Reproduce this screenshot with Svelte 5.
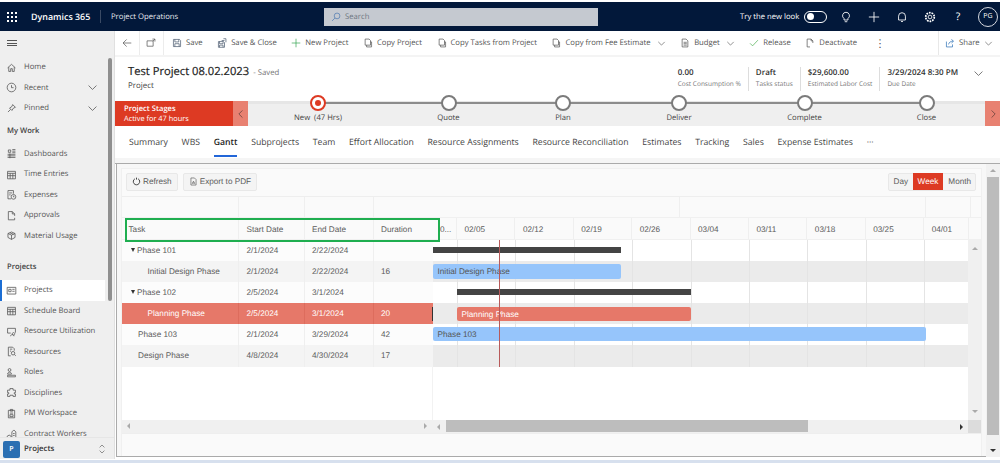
<script>
  const icons = {
    home: 'M2 7.5 7 3l5 4.5M3.5 6.5V12h2.5V8.5h2V12h2.5V6.5',
    clock: 'M7 1.5a5.5 5.5 0 1 0 0 11 5.5 5.5 0 0 0 0-11ZM7 4v3.2h2.6',
    pin: 'M8.5 2 12 5.5 9.5 6.5 7.5 9.5 4.5 6.5 7.5 4.5ZM5.8 8.2 2.5 11.5',
    dash: 'M3 2.5h3v3H3ZM8 2h4M8 4h4M8 6h4M2 8h10M2 10h10M2 12h10M5 7v6',
    cal: 'M2 3h10v9.5H2ZM2 5.5h10M5.3 5.5v7M8.7 5.5v7M2 8.5h10',
    exp: 'M2.5 2h7v4M2.5 2v10.5h4M4 5h4M4 7.5h2M9.5 7a3 3 0 1 0 0 6 3 3 0 0 0 0-6ZM9.5 8.5V10h1.2',
    doc: 'M3 2h5l3 3v2.5M3 2v10.5h8V10M8 2v3h3',
    box: 'M2.5 4.5 7 2.5l4.5 2v5L7 12 2.5 9.5ZM2.5 4.5 7 6.5l4.5-2M7 6.5V12M5 3.5l4.5 2',
    proj: 'M1.5 3h11v8.5h-11ZM3.5 5.5h3v3h-3ZM8 5.5h3M8 8h3',
    util: 'M2 3h10v5.5M2 3v6h4M8 10a1.6 1.6 0 1 0 0-.1ZM5.8 13c.3-1.7 1.2-2 2.2-2s2 .4 2.2 2',
    res: 'M3 1.5h5.5l2 2V6M3 1.5V12.5h3M5 4h3M5 6.5h1.5M9 7a2.2 2.2 0 1 0 0 4.4A2.2 2.2 0 0 0 9 7ZM10.6 10.8 12.5 12.5',
    role: 'M4.5 2a1.8 1.8 0 1 0 0 3.6 1.8 1.8 0 0 0 0-3.6ZM2 9c.2-1.6 1.2-2.4 2.5-2.4S7 7.4 7 9ZM2 10.5h10v2H2Z',
    disc: 'M5 2h4v2h3v3.2h-1.5v1.6H12V12H9v-1.5H5V12H2V8.8h1.5V7.2H2V4h3Z',
    pm: 'M3 3h8v9.5H3ZM5.5 1.8h3V4h-3ZM5 6.5h4M5 8.5h4V11H5Z',
    worker: 'M1.5 12.5v-2L4 9l2.5 1.5v2ZM7.5 12.5V5L10 2.5 12.5 5v7.5ZM9 7h2M9 9.5h2',
    save: 'M2 2h8.5L12 3.5V12H2ZM4 2v3.5h5.5V2M4 12V8h6v4',
    saveclose: 'M2 5h7l1.5 1.5V13H2ZM3.5 5v3h5V5M3.5 13V10h5v3M9 1h3.5v5M10.5 3.5H6.5',
    plus: 'M7 1v12M1 7h12',
    copy: 'M3 1.5h5.5l2 2V10H3ZM5 10v2.5h7V5.5h-1.5',
    page: 'M3 1.5h5.5L11 4v8.5H3ZM5 6h4.5M5 8h4.5M5 10h4.5',
    check: 'M1.5 7.5 5 11l7.5-8',
    deact: 'M3 1.5h5.5L11 4v3M3 1.5v11h4M8.5 1.5V4H11',
    share: 'M2 5v7.5h8.5V9M5 9c.5-3 3-4.5 6-4.5M9 2l3 2.5L9 7',
    pdf: 'M3 1.5h5.5L11 4v8.5H3ZM5 10.5 7 6.5l2 4M5.5 9.5h3',
    popup: 'M1.5 4H10v7.5H1.5ZM9 1.5h3.5V5M12.5 1.5 9.5 4.5',
    back: 'M13 7H1.5M6.5 2 1.5 7l5 5',
    chev: 'M2 4.5 7 9.5l5-5',
    bulb: 'M7 1.5a4 4 0 0 0-2.3 7.3v1.7h4.6V8.8A4 4 0 0 0 7 1.5ZM5.5 12.5h3',
    bell: 'M3 10.5V6a4 4 0 0 1 8 0v4.500ZM5.8 12.3h2.400',
    refresh: 'M9.5 2.8a5 5 0 1 1-5 0M7 1v3'
  };

  const top1 = [['Home','home'],['Recent','clock',true],['Pinned','pin',true]];
  const work = [['Dashboards','dash'],['Time Entries','cal'],['Expenses','exp'],['Approvals','doc'],['Material Usage','box']];
  const projects = [['Projects','proj'],['Schedule Board','cal'],['Resource Utilization','util'],['Resources','res'],['Roles','role'],['Disciplines','disc'],['PM Workspace','pm'],['Contract Workers','worker']];

  const commands = [
    { t:'Save', i:'save', c:'#4a5a70' }, { t:'Save & Close', i:'saveclose', c:'#4a5a70' },
    { t:'New Project', i:'plus', c:'#3aa655' }, { t:'Copy Project', i:'copy' },
    { t:'Copy Tasks from Project', i:'copy' }, { t:'Copy from Fee Estimate', i:'copy', d:1 },
    { t:'Budget', i:'page', d:1 }, { t:'Release', i:'check', c:'#4caf50' }, { t:'Deactivate', i:'deact' }
  ];

  const kpis = [['0.00','Cost Consumption %'],['Draft','Tasks status'],['$29,600.00','Estimated Labor Cost'],['3/29/2024 8:30 PM','Due Date']];
  const stages = [['New  (47 Hrs)',140],['Quote',121],['Plan',108],['Deliver',124],['Complete',127],['Close',117]];
  const tabs = ['Summary','WBS','Gantt','Subprojects','Team','Effort Allocation','Resource Assignments','Resource Reconciliation','Estimates','Tracking','Sales','Expense Estimates','···'];
  const rows = [
    { n:'Phase 101', s:'2/1/2024', e:'2/22/2024', d:'', lv:1, arrow:true },
    { n:'Initial Design Phase', s:'2/1/2024', e:'2/22/2024', d:'16', lv:2 },
    { n:'Phase 102', s:'2/5/2024', e:'3/1/2024', d:'', lv:1, arrow:true },
    { n:'Planning Phase', s:'2/5/2024', e:'3/1/2024', d:'20', lv:2, sel:true },
    { n:'Phase 103', s:'2/1/2024', e:'3/29/2024', d:'42', lv:1 },
    { n:'Design Phase', s:'4/8/2024', e:'4/30/2024', d:'17', lv:1 }
  ];
  const bars = [
    { x:0, w:188, y:7, h:6, k:'sum' },
    { x:0, w:188, y:3, h:15, k:'task', t:'Initial Design Phase' },
    { x:24, w:234, y:7, h:6, k:'sum' },
    { x:24, w:234, y:4, h:14, k:'sel', t:'Planning Phase' },
    { x:0, w:493, y:3, h:14, k:'task', t:'Phase 103' }
  ];
  const weeks = ['02/05','02/12','02/19','02/26','03/04','03/11','03/18','03/25','04/01'];
</script>

<div class="page">
  <header class="nav">
    <svg class="waffle" viewBox="0 0 10 10" width="10" height="10">
      {#each [1,5,9] as y}{#each [1,5,9] as x}<rect x={x-1} y={y-1} width="2" height="2" fill="#fff"/>{/each}{/each}
    </svg>
    <span class="brand">Dynamics 365</span>
    <span class="appname">Project Operations</span>
    <div class="search">
      <svg viewBox="0 0 14 14" width="10" height="10"><path d="M8.5 1.5a4 4 0 1 0 0 8 4 4 0 0 0 0-8ZM5.5 8.5 1.5 12.5" style="stroke:#4c78b0"/></svg>
      <span>Search</span>
    </div>
    <span class="try">Try the new look</span>
    <span class="toggle"><i></i></span>
    <div class="navicons">
      <svg viewBox="0 0 14 14" width="12" height="12"><path d={icons.bulb}/></svg>
      <svg viewBox="0 0 14 14" width="12" height="12"><path d={icons.plus}/></svg>
      <svg viewBox="0 0 14 14" width="12" height="12"><path d={icons.bell}/></svg>
      <svg viewBox="0 0 14 14" width="12" height="12"><path d="M7 4.8a2.2 2.2 0 1 0 0 4.4 2.2 2.2 0 0 0 0-4.4Z"/><circle cx="7" cy="7" r="5" stroke-dasharray="2 1.1" stroke-width="2"/></svg>
      <span class="q">?</span>
      <span class="avatar">PG</span>
    </div>
  </header>

  <div class="body">
    <aside class="side">
      <div class="burger"><i></i><i></i><i></i></div>
      <div class="sidescroll">
        {#each top1 as [t,i,c]}
          <div class="item"><svg viewBox="0 0 14 14" width="11" height="11"><path d={icons[i]}/></svg><span>{t}</span>
            {#if c}<svg class="ch" viewBox="0 0 14 14" width="11" height="11"><path d={icons.chev}/></svg>{/if}</div>
        {/each}
        <div class="head mywork">My Work</div>
        {#each work as [t,i]}
          <div class="item"><svg viewBox="0 0 14 14" width="11" height="11"><path d={icons[i]}/></svg><span>{t}</span></div>
        {/each}
        <div class="head prj">Projects</div>
        {#each projects as [t,i],n}
          <div class="item" class:active={n===0}><svg viewBox="0 0 14 14" width="11" height="11"><path d={icons[i]}/></svg><span>{t}</span></div>
        {/each}
        <div class="thumb"></div>
      </div>
      <div class="area">
        <span class="p">P</span><span class="areaname">Projects</span>
        <svg viewBox="0 0 10 14" width="8" height="12"><path d="M2 5l3-3 3 3M2 9l3 3 3-3" style="stroke:#777"/></svg>
      </div>
    </aside>

    <main class="main">
      <div class="cmd">
        <div class="sq"><svg viewBox="0 0 14 14" width="10" height="10"><path d={icons.back}/></svg></div>
        <div class="sq"><svg viewBox="0 0 14 14" width="10" height="10"><path d={icons.popup}/></svg></div>
        <div class="cmds">
          {#each commands as c}
            <div class="c">
              <svg viewBox="0 0 14 14" width="10" height="10"><path d={icons[c.i]} style:stroke={c.c}/></svg>
              <span>{c.t}</span>
              {#if c.d}<svg class="dd" viewBox="0 0 14 14" width="9" height="9"><path d={icons.chev}/></svg>{/if}
            </div>
          {/each}
          <span class="dots">⋮</span>
        </div>
        <div class="share">
          <svg viewBox="0 0 14 14" width="10" height="10"><path d={icons.share} style="stroke:#2c6fb5"/></svg>
          <span>Share</span>
          <svg viewBox="0 0 14 14" width="9" height="9"><path d={icons.chev}/></svg>
        </div>
      </div>

      <div class="title">
        <div class="tleft">
          <div class="tl1"><h1>Test Project 08.02.2023</h1><span class="saved">- Saved</span></div>
          <div class="tl2">Project</div>
        </div>
        <div class="kpis">
          {#each kpis as [a,b]}
            <div class="kpi"><b>{a}</b><span>{b}</span></div>
          {/each}
          <svg class="kchev" viewBox="0 0 14 14" width="11" height="11"><path d={icons.chev}/></svg>
        </div>
      </div>

      <div class="stage">
        <div class="red"><b>Project Stages</b><span>Active for 47 hours</span></div>
        <div class="arrow"><svg viewBox="0 0 14 14" width="10" height="10"><path d="M9 2 4 7l5 5"/></svg></div>
        <div class="stages">
          {#each stages as [t,w],i}
            <div class="st" style:width="{w}px">
              <span class="dot" class:cur={i===0}></span>
              <span class="lbl">{t}</span>
            </div>
          {/each}
        </div>
        <div class="arrow r"><svg viewBox="0 0 14 14" width="10" height="10"><path d="M5 2l5 5-5 5"/></svg></div>
      </div>

      <nav class="tabs">
        {#each tabs as t}<span class="tab" class:on={t==='Gantt'}>{t}</span>{/each}
      </nav>

      <section class="wrap">
        <div class="panel">
          <div class="gantt">
            <div class="tools">
              <button><svg viewBox="0 0 14 14" width="9" height="9"><path d={icons.refresh} style="stroke:#333;stroke-width:1.4"/></svg>Refresh</button>
              <button><svg viewBox="0 0 14 14" width="9" height="9"><path d={icons.pdf}/></svg>Export to PDF</button>
              <div class="views"><span>Day</span><span class="von">Week</span><span class="mon">Month</span></div>
            </div>

            <div class="grid">
              <div class="left">
                <div class="hrow top"><i class="c1"></i><i class="c2"></i><i class="c3"></i><i class="c4"></i></div>
                <div class="hrow"><i class="c1">Task</i><i class="c2">Start Date</i><i class="c3">End Date</i><i class="c4">Duration</i></div>
                {#each rows as r}
                  <div class="row" class:sel={r.sel}>
                    <i class="c1 lv{r.lv}">{#if r.arrow}<em></em>{/if}{r.n}</i><i class="c2">{r.s}</i><i class="c3">{r.e}</i><i class="c4">{r.d}</i>
                  </div>
                {/each}
                <div class="fill"></div>
                <div class="hs"><em class="al"></em><em class="ar"></em></div>
              </div>

              <div class="right">
                <div class="trow top">
                  <i style="width:247px"></i><i style="width:246px"></i><i style="width:45px"></i>
                </div>
                <div class="trow">
                  <i style="width:24px">0...</i>
                  {#each weeks as w,n}<i style:width="{n===8 ? 45 : 58.4}px">{w}</i>{/each}
                </div>
                <div class="canvas">
                  <div class="lines">
                    {#each weeks as _, i}<u style:left="{24 + i*58.4}px"></u>{/each}
                  </div>
                  {#each rows as r,i}
                    <div class="trk" class:alt={i%2===1}>
                      {#if bars[i]}
                        <div class="bar {bars[i].k}" style:left="{bars[i].x}px" style:width="{bars[i].w}px" style:top="{bars[i].y}px" style:height="{bars[i].h}px">{bars[i].t ?? ''}</div>
                      {/if}
                    </div>
                  {/each}
                  <div class="today"></div>
                  <div class="tick"></div>
                  <div class="vs"><em class="up"></em><em class="down"></em></div>
                </div>
                <div class="hs2"><em class="al"></em><div class="hthumb"></div><em class="ar dark"></em><span class="corner"></span></div>
              </div>
            </div>
            <div class="foot"></div>
            <div class="mark"></div>
          </div>
        </div>
        <div class="pagescroll"><em class="up"></em><div class="pthumb"></div><em class="down dark"></em></div>
      </section>
    </main>
  </div>
  <div class="strip"></div>
</div>

<style>
  :global(body){margin:0;background:#fff;}
  .page{width:1000px;height:463px;overflow:hidden;font-family:"Open Sans","Noto Sans",sans-serif;color:#333;position:relative;display:flex;flex-direction:column;text-rendering:geometricPrecision;}
  svg path{fill:none;stroke:#555;stroke-width:1;}
  i,em,u{font-style:normal;text-decoration:none;}

  .nav{height:29px;margin-top:2px;background:#02183a;color:#fff;display:flex;align-items:center;flex:none;}
  .waffle{margin-left:7px;}
  .brand{margin-left:14px;font-size:8.9px;font-weight:600;width:69px;border-right:1px solid #3a4a64;line-height:13px;}
  .appname{margin-left:10px;font-size:7.7px;width:213px;color:#e8ebf0;}
  .search{width:274px;height:18px;background:#c5c9d0;display:flex;align-items:center;gap:4px;padding-left:7px;box-sizing:border-box;font-size:7.7px;color:#6f7782;}
  .try{margin-left:142px;font-size:7.7px;width:64px;white-space:nowrap;}
  .toggle{height:10px;border:1px solid #fff;border-radius:7px;display:flex;align-items:center;padding-left:2px;width:19px;}
  .toggle i{width:7px;height:7px;background:#fff;border-radius:50%;}
  .navicons{display:flex;align-items:center;margin-left:13px;gap:16px;}
  .navicons svg path,.navicons svg circle{stroke:#fff;fill:none;}
  .q{width:12px;text-align:center;font-size:10.5px;}
  .avatar{width:18px;height:18px;border:1px solid #d5d8df;border-radius:50%;font-size:7px;display:flex;align-items:center;justify-content:center;margin-left:-2px;}

  .body{display:flex;flex:1;min-height:0;}
  .side{width:115px;flex:none;background:#efefef;border-right:1px solid #e0e0e0;box-sizing:border-box;display:flex;flex-direction:column;position:relative;height:428px;}
  .burger{height:24px;padding:9px 0 0 7px;box-sizing:border-box;display:flex;flex-direction:column;gap:1.5px;flex:none;}
  .burger i{width:10px;height:1px;background:#555;display:block;}
  .sidescroll{flex:1;overflow:hidden;position:relative;padding-top:2px;}
  .item{height:20.5px;display:flex;align-items:center;font-size:7.7px;color:#555;padding-left:6px;gap:7px;width:105px;box-sizing:border-box;position:relative;}
  .item span{white-space:nowrap;}
  .item .ch{position:absolute;right:7px;}
  .item.active{background:#fff;box-shadow:inset 2px 0 0 #1c6ed4;}
  .head{font-size:7.6px;font-weight:600;color:#444;padding-left:7px;}
  .mywork{height:13px;margin:6px 0 6px;line-height:13px;}
  .prj{height:13px;margin:15px 0 6px;line-height:13px;}
  .thumb{position:absolute;top:3px;left:108px;width:4px;height:243px;background:#8f8f8f;border-radius:2px;}
  .area{height:22px;flex:none;background:#efefef;border-top:1px solid #e6e6e6;display:flex;align-items:center;padding:1px 0 0 3px;font-size:7.8px;font-weight:600;color:#333;position:relative;box-sizing:border-box;}
  .p{width:17px;height:17px;background:#2b6fb2;color:#fff;border-radius:2px;display:flex;align-items:center;justify-content:center;font-size:7px;}
  .areaname{margin-left:4px;width:74px;}

  .main{flex:1;display:flex;flex-direction:column;min-width:0;background:#fff;}
  .cmd{height:24px;flex:none;display:flex;align-items:stretch;border-bottom:2px solid #f4f4f4;}
  .sq{width:24.5px;display:flex;align-items:center;justify-content:center;border-right:1px solid #ececec;box-sizing:border-box;}
  .cmds{display:flex;align-items:center;gap:14.5px;flex:1;padding-left:8px;}
  .c{display:flex;align-items:center;gap:4px;font-size:7.7px;color:#555;white-space:nowrap;}
  .c .dd{margin-left:2px;}
  .dots{font-size:11px;color:#555;margin-left:3px;}
  .share{width:62px;border-left:1px solid #e8e8e8;display:flex;align-items:center;gap:4px;font-size:7.7px;color:#555;padding-left:6px;box-sizing:border-box;}

  .title{height:44px;flex:none;display:flex;justify-content:space-between;position:relative;}
  .tleft{padding:6px 0 0 13px;}
  .tl1{display:flex;align-items:baseline;gap:4px;}
  h1{margin:0;font-size:11.2px;font-weight:400;color:#222;line-height:18px;-webkit-text-stroke:.2px #222;}
  .saved{font-size:7.8px;color:#777;}
  .tl2{font-size:7.9px;color:#444;line-height:11px;}
  .kpis{display:flex;padding-top:10px;padding-right:16px;align-items:flex-start;}
  .kpi{display:flex;flex-direction:column;border-left:1px solid #ddd;padding:0 7px 0 7px;height:24px;}
  .kpi:first-child{border-left:0;}
  .kpi b{font-size:8px;font-weight:600;color:#333;line-height:11px;white-space:nowrap;}
  .kpi span{font-size:6.5px;color:#777;line-height:11px;white-space:nowrap;}
  .kchev{margin:1px 0 0 8px;}

  .stage{height:25px;flex:none;display:flex;background:#efefef;}
  .red{width:118px;background:#dd3a23;color:#fff;font-size:7.4px;display:flex;flex-direction:column;justify-content:center;padding-left:9px;box-sizing:border-box;line-height:10px;}
  .red b{font-weight:600;font-size:7.6px;}
  .arrow{width:15px;background:#e88171;display:flex;align-items:center;justify-content:center;flex:none;}
  .arrow svg path{stroke:#5a3a35;}
  .stages{display:flex;position:relative;flex:1;}
  .stages::before{content:"";position:absolute;left:0;right:0;top:0;height:3px;background:#e6e6e6;}
  .stages::after{content:"";position:absolute;left:70px;width:610px;top:1px;height:2px;background:#8c8c8c;}
  .st{display:flex;flex-direction:column;align-items:center;position:relative;z-index:1;flex:none;}
  .dot{width:12px;height:12px;border:2px solid #7b7b7b;border-radius:50%;background:#fff;margin-top:-6px;}
  .dot.cur{border-color:#dd3a23;position:relative;}
  .dot.cur::after{content:"";position:absolute;left:3px;top:3px;width:6px;height:6px;border-radius:50%;background:#dd3a23;}
  .lbl{font-size:7.7px;color:#444;margin-top:2px;white-space:pre;}
  .arrow.r{margin-left:-3px;position:relative;z-index:2;}

  .tabs{flex:none;display:flex;gap:13.7px;padding:0 0 0 14px;box-sizing:border-box;height:37px;background:linear-gradient(#fff 32px,#f5f5f5 32px);}
  .tab{font-size:8.7px;color:#444;line-height:32px;height:30px;white-space:nowrap;}
  .tab.on{font-weight:600;color:#222;border-bottom:2px solid #2266d8;height:29px;}

  .wrap{display:flex;flex:none;background:#fff;border-top:1px solid #aaa;height:294px;box-sizing:border-box;}
  .panel{flex:1;margin-left:1px;border-left:1px solid #aaa;border-bottom:1px solid #aaa;background:#f7f7f7;padding:4px 4px 0 4px;height:293px;box-sizing:border-box;min-width:0;}
  .gantt{position:relative;display:flex;flex-direction:column;background:#fafafa;border:1px solid #f0f0f0;border-bottom:0;height:288px;box-sizing:border-box;font-family:"Liberation Sans",Arial,sans-serif;}
  .tools{height:28px;flex:none;display:flex;align-items:center;padding:0 5px 2px 4px;gap:5px;border-bottom:1px solid #eee;box-sizing:border-box;}
  button{height:18px;padding:0 5px;display:flex;align-items:center;gap:2px;background:#f4f4f4;border:1px solid #e8e8e8;border-radius:2px;font:8.2px "Liberation Sans",Arial,sans-serif;color:#5c5c5c;text-rendering:geometricPrecision;}
  .views{margin-left:auto;display:flex;height:18px;background:#f4f4f4;border:1px solid #e8e8e8;border-radius:2px;font-size:8.2px;color:#5c5c5c;align-items:center;box-sizing:border-box;width:88px;}
  .views span{padding:0 4.5px;line-height:17px;}
  .views .von{background:#dd3a23;color:#fff;padding:0 5px;}
  .views .mon{padding:0 3px 0 5px;}

  .grid{display:flex;flex:none;height:236px;}
  .left{width:311px;flex:none;display:flex;flex-direction:column;}
  .hrow,.row{display:flex;font-size:8.2px;color:#5c5c5c;}
  .hrow{height:22px;line-height:23px;border-bottom:1px solid #f0f0f0;box-sizing:border-box;}
  .hrow.top{height:21px;}
  .hrow i,.row i{display:block;border-right:1px solid #efefef;box-sizing:border-box;padding-left:7.5px;white-space:nowrap;}
  .c1{width:117px;}.c2{width:65.5px;}.c3{width:69px;}.c4{width:59.5px;border-right:0 !important;}
  .hrow .c1{padding-left:6.5px;}
  .row{height:21.1px;line-height:21px;background:#fcfcfc;}
  .row:nth-child(even){background:#f4f4f4;}
  .row .lv1{padding-left:16px;}
  .row .lv2{padding-left:25.5px;}
  .row:nth-child(3) .c1,.row:nth-child(5) .c1{padding-left:9px;}
  .row em{display:inline-block;width:0;height:0;border:2.5px solid transparent;border-top:4px solid #333;border-bottom:0;margin-right:2px;vertical-align:1px;}
  .row.sel{background:#e67869 !important;color:#fff;}
  .row.sel i{border-right-color:#dd6c5d;}
  .fill{height:53px;background:#fff;border-right:1px solid #f2f2f2;box-sizing:border-box;}
  .hs{height:13px;background:#f0f0f0;position:relative;}
  .al,.ar{position:absolute;top:3.5px;width:0;height:0;border:3px solid transparent;border-left:0;border-right:3px solid #aaa;}
  .hs .al{left:5px;}
  .ar{border-right:0;border-left:3px solid #aaa;}
  .hs .ar{right:6px;}
  .right{width:548px;flex:none;display:flex;flex-direction:column;}
  .trow{display:flex;height:22px;line-height:23px;font-size:8.2px;color:#5c5c5c;border-bottom:1px solid #f0f0f0;box-sizing:border-box;}
  .trow.top{height:21px;}
  .trow i{display:block;box-sizing:border-box;border-right:1px solid #efefef;padding-left:7.5px;white-space:nowrap;overflow:hidden;flex:none;}
  .trow i:first-child{padding-left:7px;}
  .canvas{position:relative;width:548px;height:180px;background:#fff;}
  .lines{position:absolute;left:0;top:0;right:0;z-index:1;height:127px;}
  .lines u{position:absolute;top:0;bottom:0;width:1px;background:#e4e4e4;}
  .trk{height:21.1px;position:relative;width:535px;}
  .trk.alt{background:#ebebeb;}
  .bar{position:absolute;font-size:8.2px;line-height:15px;padding-left:4.5px;box-sizing:border-box;white-space:nowrap;overflow:hidden;z-index:2;}
  .bar.sum{background:#444;}
  .bar.task{background:#96c5fb;color:#555;border-radius:2px;}
  .bar.sel{background:#e67869;color:#fff;border-radius:2px;}
  .today{position:absolute;left:66px;top:0;height:127px;width:1px;background:#b85a5a;z-index:3;}
  .tick{position:absolute;left:-1px;top:67px;width:1px;height:14px;background:#333;z-index:3;}
  .vs{position:absolute;right:0;top:0;bottom:0;width:13px;background:#f0f0f0;}
  .up,.down{position:absolute;left:50%;margin-left:-3px;width:0;height:0;border:3px solid transparent;border-top:0;border-bottom:3px solid #aaa;}
  .vs .up{top:7px;}
  .down{border-bottom:0;border-top:3px solid #aaa;}
  .vs .down{bottom:7px;}
  .hs2{height:13px;background:#f0f0f0;position:relative;}
  .hs2 .al{left:4px;}
  .hthumb{position:absolute;left:13px;width:362px;height:12px;top:0;background:#bdbdbd;}
  .hs2 .ar{left:527px;}
  .ar.dark{border-left-color:#333;}
  .corner{position:absolute;right:0;top:0;width:13px;height:13px;background:#dcdcdc;}
  .foot{flex:1;background:#fafafa;border-top:1px solid #eee;}
  .mark{position:absolute;left:3px;top:49px;width:315px;height:24px;border:2px solid #1fae50;box-sizing:border-box;pointer-events:none;}

  .pagescroll{width:14px;flex:none;background:#f1f1f1;position:relative;height:293px;}
  .pagescroll .up{top:5px;}
  .pthumb{position:absolute;left:1px;width:12px;top:13px;height:258px;background:#bcbcbc;}
  .pagescroll .down{bottom:5px;}
  .down.dark{border-top-color:#333;}
  .strip{position:absolute;left:0;right:0;bottom:0;height:3px;background:#d7e0ee;}
</style>
